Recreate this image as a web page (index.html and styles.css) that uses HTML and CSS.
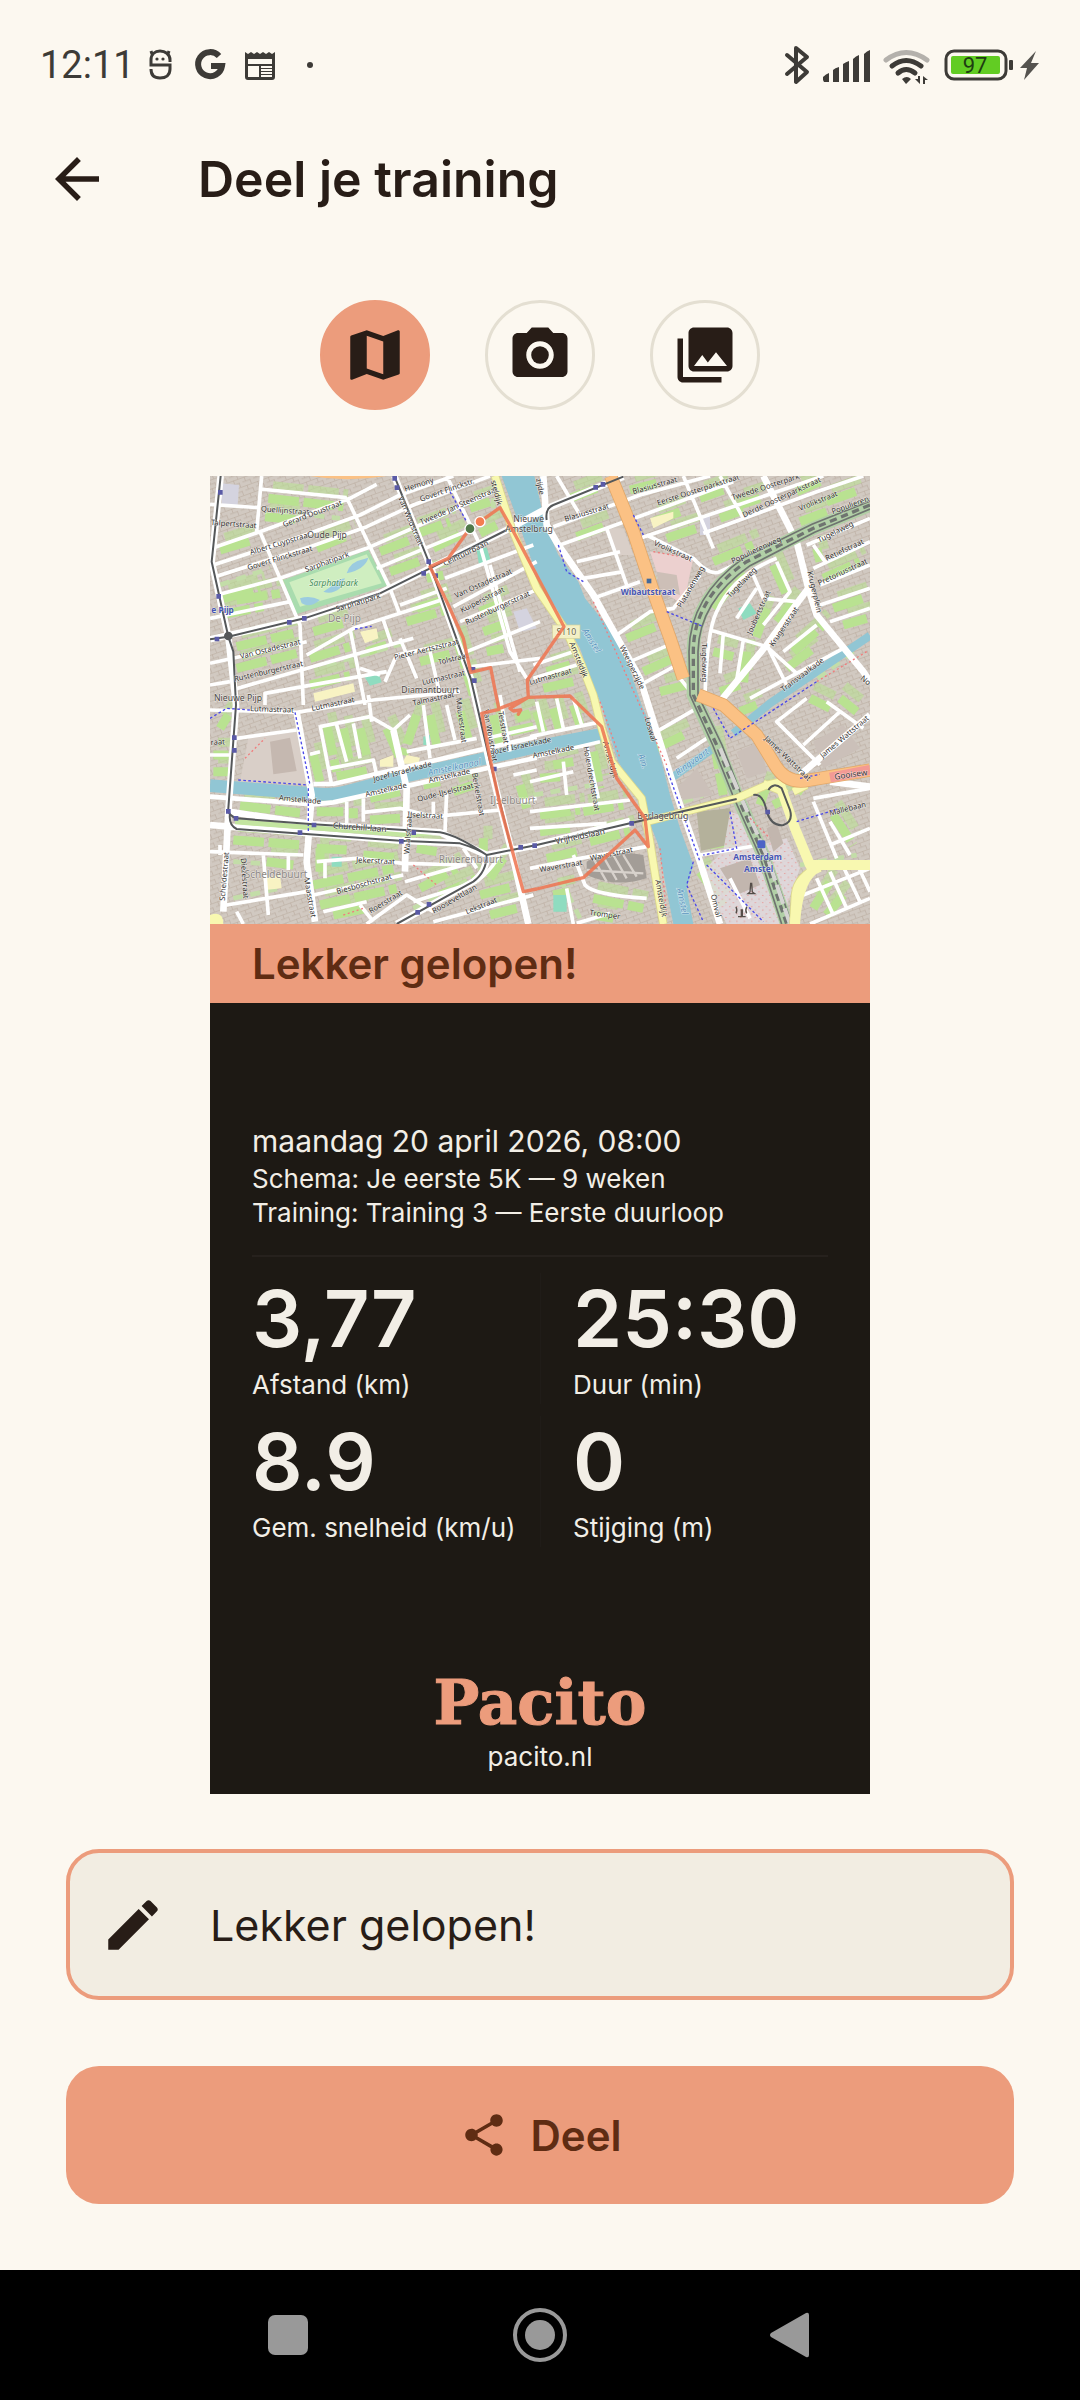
FILE: index.html
```html
<!DOCTYPE html>
<html lang="nl">
<head>
<meta charset="utf-8">
<meta name="viewport" content="width=device-width, initial-scale=1">
<title>Deel je training</title>
<link rel="stylesheet" href="styles.css">
</head>
<body>
<div class="status">
  <div class="status-side">
    <span class="clock">12:11</span>
    <svg class="ico-notes" width="170" height="40" viewBox="0 0 170 40" aria-hidden="true">
      <g fill="none" stroke="#3d3b37" stroke-width="3">
        <path d="M8 20h-2v-5c0-6 4-9 9-9s10 3 10 9v2M5 20h20v4c0 6-4 9-10 9s-9-3-9-9M7 9l-1-3M23 9l1-3"/>
      </g>
      <circle cx="12" cy="14" r="1.600" fill="#3d3b37"/><circle cx="18" cy="14" r="1.600" fill="#3d3b37"/>
      <path d="M74 11A12 12 0 1 0 77 21H66" fill="none" stroke="#3d3b37" stroke-width="6"/>
      <path d="M100 7l3 2 3-2 3 2 3-2 3 2 3-2 3 2 3-2 3 2 3-2V32q0 3-3 3H103q-3 0-3-3z" fill="#3d3b37"/>
      <path d="M103 14h24v5h-24zM103 21h11v11h-11zM116 21h11v2h-11zM116 24h11v2h-11zM116 27h11v2h-11zM116 30h11v2h-11z" fill="#fcf8f0"/>
      <circle cx="165" cy="20" r="3" fill="#3d3b37"/>
    </svg>
  </div>
  <svg class="ico-system" width="258" height="44" viewBox="0 0 258 44" aria-hidden="true">
    <path d="M5 12l20 17-11 10V5l11 9L5 31" fill="none" stroke="#3d3b37" stroke-width="4" stroke-linejoin="round" stroke-linecap="round"/>
    <path d="M41 37v-3q3-3 6-4v9h-5zM51 39V27q2-2 6-3v15zM61 39V21q3-2 6-3v21zM71 39V16q3-3 6-4v27zM82 39V11q3-3 6-4v32z" fill="#3d3b37"/>
    <g fill="none" stroke-linecap="round" stroke-width="5">
      <path d="M104 17Q124 2 145 17" stroke="#b4b1ac"/>
      <path d="M110 23Q124 12 139 23M116 30Q124 23 133 30" stroke="#3d3b37"/>
    </g>
    <path d="M120 36q5-4 9 0l-5 5zM133 36h3v-3h2v8zM141 33l5 4h-3v4h-2z" fill="#3d3b37"/>
    <rect x="164" y="8" width="60" height="28" rx="8" fill="none" stroke="#3d3b37" stroke-width="3"/>
    <rect x="169" y="13" width="49" height="18" rx="2" fill="#62cc23"/>
    <text class="battery-text" x="193" y="30" text-anchor="middle">97</text>
    <rect x="227" y="17" width="4" height="10" rx="1" fill="#3d3b37"/>
    <path d="M254 8L238 25h7l-3 12 15-17h-8z" fill="#55534f"/>
  </svg>
</div>

<header class="appbar">
  <button class="back" type="button" aria-label="Terug">
    <svg width="66" height="66" viewBox="0 0 24 24"><path fill="#281d17" d="M20 11H7.830l5.590-5.590L12 4l-8 8 8 8 1.410-1.410L7.830 13H20v-2z"/></svg>
  </button>
  <h1>Deel je training</h1>
</header>

<main>
  <div class="modes">
    <button class="mode mode-on" type="button" aria-label="Kaart"><svg width="66" height="66" viewBox="0 0 24 24"><path d="M20.500 3l-.16.030L15 5.100 9 3 3.360 4.900c-.21.070-.36.250-.36.480V20.500c0 .28.220.5.5.5l.16-.030L9 18.900l6 2.100 5.640-1.900c.21-.070.36-.25.36-.48V3.500c0-.28-.22-.5-.5-.5zM15 19l-6-2.110V5l6 2.110V19z"/></svg></button>
    <button class="mode" type="button" aria-label="Camera"><svg width="66" height="66" viewBox="0 0 24 24"><circle cx="12" cy="12" r="3.200"/><path d="M9 2L7.170 4H4c-1.100 0-2 .9-2 2v12c0 1.100.9 2 2 2h16c1.100 0 2-.9 2-2V6c0-1.100-.9-2-2-2h-3.170L15 2H9zm3 15c-2.760 0-5-2.240-5-5s2.240-5 5-5 5 2.240 5 5-2.240 5-5 5z"/></svg></button>
    <button class="mode" type="button" aria-label="Galerij"><svg width="66" height="66" viewBox="0 0 24 24"><path d="M22 16V4c0-1.100-.9-2-2-2H8c-1.100 0-2 .9-2 2v12c0 1.100.9 2 2 2h12c1.100 0 2-.9 2-2zm-11-4l2.030 2.710L16 11l4 5H8l3-4zM2 6v14c0 1.100.9 2 2 2h14v-2H4V6H2z"/></svg></button>
  </div>

  <article class="card">
    <svg class="map" viewBox="30 33 1980 1344" preserveAspectRatio="xMidYMid slice" role="img" aria-label="Kaart met de gelopen route">
      <defs>
        <pattern id="blocks" width="34" height="26" patternUnits="userSpaceOnUse" patternTransform="rotate(-20)">
          <rect width="34" height="26" fill="#d1c9c1"/>
          <path d="M0 1h34M0 14h24M10 0v14M24 12v14" stroke="#bbada2" stroke-width="2"/>
        </pattern>
        <pattern id="plaza" width="22" height="22" patternUnits="userSpaceOnUse">
          <rect width="22" height="22" fill="#e2dbe0"/>
          <path d="M3 5h4M14 15h4" stroke="#f08a8a" stroke-width="3"/>
        </pattern>
      </defs>
      <rect x="30" y="33" width="1980" height="1344" fill="url(#blocks)"/>

      <!-- gardens between the housing blocks -->
      <g id="gardens" fill="none" stroke="#b9e291" stroke-width="27" stroke-dasharray="92 14">
        <path d="M205 100L430 125M195 155L300 165M60 255L160 225M70 400l110-30M110 405l130-20M60 450l130-25M110 545l170-40M110 610l180-45M330 580l120-35M330 660l120-28M340 500l90-25M350 250l100-40M540 260l90-35M570 320l100-35M640 210l110-40M700 250l80-40M810 130l60-20M840 205l50-25M650 430l80-25M620 470l120-35M660 590l100-25M770 520l50 170M840 440l70-30M850 500l70-25M1000 340l40 60M500 560l60-20M680 340l50-10M860 560l50-10"/>
        <path d="M1110 100l80-30M1290 75l80-20M1130 215l80-30M1360 170l80-30M1400 220l90-30M1500 100l70-25M1560 160l70-25M1620 120l60-20M1790 80l70-30M1800 170l80-30M1880 110l100-35M1540 290l120-50M1280 520l100-40M1330 620l90-40M1380 680l80-20M1540 430l90-110M1720 300l40 90M1700 430l-40 110M1540 560l60 15M1640 560l-10 100M1560 680l60-20M1780 560l90-80M1760 610l80-60M1870 340l110-50M1900 430l90-30M1930 480l70-20M1730 470l50-60M1850 250l10 40M1040 620l70-20M1030 670l90-20"/>
        <path d="M60 790l25-40M40 870h45M40 920h45M120 1022l180 22M350 1040h80M460 1030v30M510 1000l90-20M510 1065l90-5M380 780l30 140M430 790l20 110M480 790l20 80M560 790l40 90M650 750l-40 120M340 870l20 80M410 935l100-20M690 750l20 90M780 740l30 100M100 1125l210 15M350 1150l90 5M360 1220v-70M650 1150l60 10M200 1190l80 10M340 1260l240-50M360 1320l230-50M400 1350l100-20M490 1170l100 8M660 1270l110-60M720 1290l110-50M840 1290l100-25M870 1350l80-20M850 1120v40M870 1240l40-60M760 980l60-20M670 960l50-10M880 750l20 90M950 760l40-15M930 800l70-15M960 960l20 70"/>
        <path d="M1010 740l20 60M1060 730l20 70M1120 720l20 60M1180 860l20 110M1060 900l60-10M1020 940l60-5M1020 1050l120-15M1150 1040l120-20M1020 1100l90-10M1040 1180l90-20M1170 1130l120-30M1060 1290l50-10M1180 1300l150 30M1180 1350l60 10M1370 850l80-40M1540 820l30 170M1500 1220l70 100M1520 1140l80-10M1700 960l-20 60M1720 1020l40-20M1780 960l30 20M1840 1330l50-80M1880 1350l50-60M1900 1050l60 90M1830 700l60 30M1920 700l50 40M1620 740l50-20"/>
      </g>
      <use href="#gardens" transform="translate(14 -38)" opacity=".55"/>
      <g fill="none" stroke="#c3dda8" stroke-width="14" stroke-dasharray="30 22">
        <path d="M240 140l180 20M60 360l150-50M380 600l250-70M880 100v60M1340 330l130 60M1800 1200l170-30M640 1330l160-80M100 1300l140-30M100 1190l80 5M1080 1240l60 120M1000 990l180-30M1960 560l-120 90M1450 1010l60-20"/>
      </g>

      <!-- squares and large buildings -->
      <path d="M65 55l52 5-4 60H65zM1500 150h30v60h-30zM940 440l40-10 30 60-50 10z" fill="#d4d3df"/>
      <path d="M145 820l145-20 30 160-200-10zM1220 190h50l30 80h-50z" fill="#d9cfc8"/>
      <path d="M210 830l60-12 20 100-70 10zM1340 360l80-40 20 60-60 30z" fill="#c5b8b0"/>
      <path d="M1350 260l130 20-30 140-60-40z" fill="#ecd0cf"/>
      <path d="M1370 320l60 10 10 60-60-20z" fill="#cdbfb7"/>
      <path d="M1490 1040l100-10 18 105-105 22z" fill="#b4b19b"/>
      <path d="M1430 970l60-60 50 80-90 15zM1610 860l70-30 20 90-60 20zM1840 830l90-50 50 70-110 60zM1555 1200l100-30 30 90-80 30z" fill="#cbc0b9"/>
      <path d="M1590 1040l60 20 30 80 80-20 40 90-60 167h-160l-80-150 70-70z" fill="url(#plaza)" opacity=".8"/>
      <path d="M1560 1210l90-30 30 80-70 30zM1700 1090l30-15 20 60-30 25z" fill="#c2b6ae"/>
      <path d="M480 500l50-10 5 30-40 15zM340 685l120-30 5 25-120 30zM540 885l40-15v35h-40zM620 870l40 8-5 18h-50zM190 1240l50-10 5 40-50 5zM1350 160l70-20v20l-60 30z" fill="#f8f3c3"/>
      <path d="M1160 1190q60-40 170-20l10 70q-90 30-180-10z" fill="#a39d97"/>
      <path d="M1180 1180l40 70M1210 1175l40 70M1240 1170l40 70M1270 1170l40 65M1160 1215l170 10" stroke="#d8d2cc" stroke-width="7"/>
      <g fill="#8fdcc0">
        <path d="M830 255l30-8 12 40-35 12zM490 630l45-8 10 30-35 10zM1615 430l35-15 20 30-40 20zM670 815l20-5v30h-20zM395 1175h30v30h-30zM1060 1290h40v50h-40z"/>
      </g>

      <!-- park -->
      <path d="M250 345L505 255 562 362 290 447z" fill="#a9dcae"/>
      <path d="M268 352L500 268 545 355 300 425z" fill="#cfeec0"/>
      <path d="M300 400q30-10 60 5-30 25-55 10zM370 380q25 10 50-10l15-30q-30 5-35 20zM440 325q10-35 50-42l15-5q-10 35-65 47z" fill="#9bcbe0"/>

      <!-- water -->
      <path d="M905 33L940 130 1000 300 1050 400 1100 480 1140 550 1175 650 1205 720 1220 780 1255 890 1290 950 1340 1050 1375 1140 1395 1250 1420 1377H1480L1460 1270 1480 1200 1440 1090 1410 990 1385 890 1355 790 1325 720 1285 600 1235 500 1155 400 1135 350 1075 270 1045 200 1025 130 1003 33z" fill="#91c6d4"/>
      <g fill="none" stroke="#91c6d4">
        <path d="M30 962L340 986Q400 992 440 980L610 935 880 875 1010 845 1212 806" stroke-width="38"/>
        <path d="M1420 935L1540 850M1600 805L1710 715 1850 620 2010 512" stroke-width="24"/>
      </g>

      <!-- side streets -->
      <g fill="none" stroke="#fff" stroke-width="11" stroke-linejoin="round">
        <path d="M185 33L170 200M30 118l145 10M180 72L440 98M40 248L180 200 450 100 530 58M40 300L300 215 480 150 600 90 760 33M45 335L330 245 500 185 640 120 870 33M50 390L240 340 500 250 660 180 880 80M180 200L300 480 310 720M440 98L570 370 600 450M530 310L820 190M30 460L270 410M30 595L320 530M95 675L460 570 640 520M320 570L460 490 740 400M450 490L495 720M550 465L575 540M600 420L740 370M600 520L650 640M555 650L590 570 780 530M690 560L720 690M740 33L840 240 930 560 980 640M735 340L1000 240M760 425L1010 290M780 470L1020 370M800 560L1020 470M815 605L1020 580M870 300L960 620M195 720v-35L560 620M30 660l60-10M480 610l60 20"/>
        <path d="M1070 33L1140 150M1060 185L1320 90 1530 33M1080 240L1330 150 1600 50M1320 220L1790 60 1870 33M1510 205L1850 80 1990 33M1450 33L1540 250M1560 33L1630 160M1340 210L1480 280Q1530 335 1560 320L1730 240M1180 400L1320 350M1250 510L1350 440 1420 430 1500 330M1220 190L1280 360M1130 290L1260 260M1150 340L1270 320M1290 590L1430 530M1330 655L1430 600M2010 160L1820 240M2010 230L1840 310M2010 300L1860 360M1860 420L2010 370M1890 470L2010 430M1730 280Q1600 330 1550 440 1520 500 1515 700M1660 330L1690 400 1790 410M1730 290L1770 380 1690 480M1530 495L1700 545 1790 625M1570 505L1560 625M1630 525L1610 645M1700 540L1760 660M1610 460L1670 370M1650 700L1930 550M1750 560L1850 480M1480 690L1440 640M1840 240l35 50M1000 600L1120 560M1000 640L1130 600"/>
        <path d="M30 735L290 742 520 705 780 680M110 820L290 795M30 870H90M360 785L510 755 580 795 630 750M505 690L515 770M360 780L395 960M410 780L440 890M460 775L480 880M330 868L360 860M390 910L520 885 530 930M670 720L690 880M740 720L765 825M620 860L830 820M490 1000V1070M440 1010V1075M490 1042L600 1030 700 1055 900 1035M740 980L735 1100M350 1190L470 1180 610 1195 800 1200M375 1190V1240M340 1290L610 1230M370 1340L500 1310M615 1250L790 1200M640 1310L830 1250M30 1160L310 1170M190 1170L205 1350M265 1170V1215M80 1320L320 1280M110 1340l20 37M500 1377L620 1290 700 1340M700 1370L1000 1290M860 820L1010 785M900 690L930 860M940 930L1010 915M960 1010L1010 1000M60 1140v30M480 1320l40 50M790 1150l40 60M830 1250q60-50 70-90M700 1010v50"/>
        <path d="M1010 710L1030 800M1070 700L1090 790M1120 700L1145 780M990 815L1205 770M990 880L1200 830M1160 840L1195 1000M990 950L1120 920M1090 890L1100 990M990 1040L1290 1005M990 1090L1220 1075M990 1210L1140 1180 1340 1145M1120 1170L1155 1260Q1180 1290 1340 1300M1100 1270L1120 1377M1130 1375l100-30M1370 800L1490 730M1430 880L1520 820M1820 700L1730 770 1860 900M1880 710L1990 790M1920 740L1810 840M1840 1000L2010 970M1840 1010L1910 1180M1890 1070L1950 1170M2010 1090L1890 1140M1810 1290L2010 1210M1850 1240L1900 1350M1890 1220L1940 1330M1930 1205L1980 1310M1970 1195L2010 1280M1830 1377L2010 1300M1500 1170L1680 1140M1590 1240l60 120"/>
      </g>
      <!-- wider streets -->
      <g fill="none" stroke="#fff" stroke-width="20" stroke-linejoin="round">
        <path d="M62 33L35 290 85 515 108 720 85 1040 70 1340M30 523L313 460 540 385 690 310 920 195 1040 130 1270 35M583 33L690 300 812 640 870 900 935 1160 985 1377M85 1040L340 1078 720 1102 860 1170 1010 1140 1290 1075M30 1080L600 1127 780 1135 860 1170Q860 1220 820 1250L590 1377"/>
        <path d="M1030 33L1040 180 1075 240 1180 390 1320 640 1345 720 1430 990 1500 1190 1560 1377M1690 33L1790 230 1825 370 1850 450 1990 620 2010 650M1825 370L1780 430 1700 540 1560 710M1800 930L2010 750M2010 965L1890 950"/>
        <path d="M290 742L335 990 320 1190 345 1370M580 795L620 970 615 1220M990 1145L1290 1068"/>
      </g>
      <!-- quays -->
      <path d="M340 957H400L880 845 1010 815M30 995L340 1018 400 1012 860 910 1010 878" fill="none" stroke="#fff" stroke-width="14"/>
      <path d="M105 1062L700 1110 640 1118 105 1078z" fill="#c3e5a0"/>

      <!-- railway -->
      <g fill="none">
        <path d="M2010 120L1840 190 1640 290Q1480 400 1480 560V690L1550 840 1610 990 1690 1170 1760 1377" stroke="#b1cfa6" stroke-width="40"/>
        <g stroke="#6f7470" stroke-width="5">
          <path d="M2010 108L1836 178 1632 278Q1468 395 1467 560L1470 690 1538 840 1598 990 1678 1170 1745 1377M2010 132L1844 202 1650 302Q1497 410 1494 560V690L1566 840 1624 990 1704 1170 1775 1377"/>
          <path d="M2010 120L1840 190 1640 290Q1480 400 1480 560V690L1550 840 1610 990 1690 1170 1760 1377" stroke-width="10" stroke-dasharray="22 14"/>
        </g>
        <path d="M1560 850L1620 990 1700 1170 1770 1377" stroke="#d5d4d2" stroke-width="12" stroke-dasharray="60 14"/>
      </g>

      <!-- secondary and main roads -->
      <g fill="none" stroke-linejoin="round" stroke-linecap="butt">
        <path d="M885 33L935 190 1010 370 1100 500 1145 600 1180 690 1205 790 1235 890 1325 1000 1350 1130 1375 1290 1390 1377M1340 1070L1610 1000 1700 960 1740 950 1785 1090 1830 1200M2010 1200L1870 1200Q1790 1230 1785 1290L1780 1377M1780 980l40-20M1690 955l70 30" stroke="#dcd98d" stroke-width="25"/>
        <path d="M885 33L935 190 1010 370 1100 500 1145 600 1180 690 1205 790 1235 890 1325 1000 1350 1130 1375 1290 1390 1377M1340 1070L1610 1000 1700 960 1740 950 1785 1090 1830 1200M2010 1200L1870 1200Q1790 1230 1785 1290L1780 1377M1780 980l40-20M1690 955l70 30" stroke="#f8f8b0" stroke-width="20"/>
        <path d="M1740 960L1785 1090 1830 1200H2010M1860 1205Q1795 1225 1785 1377" stroke="#f8f8b0" stroke-width="30"/>
        <path d="M1232 33L1300 200 1360 380 1410 520 1450 640M1495 690L1570 720 1670 810 1725 900Q1760 960 1830 945L2010 915" stroke="#e2a869" stroke-width="40"/>
        <path d="M1232 33L1300 200 1360 380 1410 520 1450 640M1495 690L1570 720 1670 810 1725 900Q1760 960 1830 945L2010 915" stroke="#fbc184" stroke-width="35"/>
        <path d="M1890 938L2010 915" stroke="#f39a94" stroke-width="30"/>
      </g>
      <path d="M330 33Q440 52 560 33z" fill="#fbc184"/>
      <path d="M30 1350q40-15 40 27H30z" fill="#f8f8b0"/>

      <!-- cycle paths -->
      <g fill="none" stroke="#4a48e8" stroke-width="4" stroke-dasharray="8 7">
        <path d="M285 742L330 960M115 945L325 960M325 970V1100M30 760l50-30 70 5M750 80l50 90M1075 240L1100 320 1150 350M1400 440L1510 485M1400 910L1500 1190M1540 730L1590 820 1850 650M1590 1040L1610 1150 1510 1170M1520 1200L1690 1370M1790 1070L1920 1030M1800 940l60-12M465 492l50-8M1300 150l30 60M1480 1190l-20 70 50 110"/>
      </g>
      <g fill="none" stroke="#f07d7d" stroke-width="4" stroke-dasharray="6 8">
        <path d="M1180 410L1400 900M135 880l60-60M2000 560L1850 650M640 1200l70 60M430 1350l60-20M1380 1150l20 200M1650 1060l60 60M1360 260l110 20M1200 710l60 170"/>
      </g>

      <!-- tram lines -->
      <g fill="none" stroke="#55585a" stroke-width="6" stroke-linejoin="round">
        <path d="M62 33L35 290 85 515 100 560 108 720 85 1030Q82 1050 110 1060L340 1078 720 1102Q770 1110 860 1170L935 1155 1010 1140 1290 1075 1610 1002M30 523L85 515 313 460 540 385 690 310 920 195M1040 165Q1035 130 1060 120L1270 35M583 33L690 300 812 640 870 890 935 1155M90 1045Q85 1080 110 1092L600 1127 780 1135Q830 1150 860 1170 860 1220 820 1250L590 1377M1660 990Q1690 985 1700 1040 1715 1085 1750 1080 1780 1070 1770 1035L1745 970Q1720 950 1705 975"/>
        <circle cx="85" cy="513" r="10" fill="#55585a"/>
      </g>
      <path d="M577 33h14v14h-14zM584 61h14v14h-14zM54 75h14v14H54zM49 387h14v14H49zM44 515h14v14H44zM261 465h14v14h-14zM306 453h14v14h-14zM664 318h14v14h-14zM679 283h14v14h-14zM700 325h14v14h-14zM812 606h14v14h-14zM816 640h14v14h-14zM96 811h14v14H96zM96 849h14v14H96zM78 1032h14v14H78zM101 1053h14v14h-14zM335 1073h14v14h-14zM293 1096h14v14h-14zM597 1122h14v14h-14zM634 1096h14v14h-14zM876 905h14v14h-14zM955 1140h14v14h-14zM997 1135h14v14h-14zM680 1311h14v14h-14zM646 1335h14v14h-14zM1288 1068h14v14h-14zM1180 60h14v14h-14zM1202 51h14v14h-14zM1696 1034h14v14h-14z" fill="#5a5aa6"/>
      <path d="M1340 341h14v14h-14z" fill="#456a9a"/>
      <rect x="1672" y="1126" width="24" height="24" rx="5" fill="#4d63c6"/>
      <path d="M1644 1286h20l-7-5-2-26h-3l-2 26zM1614 1355h10v-20h3v20h10M1608 1325q5 12 0 20M1640 1325q-5 12 0 20" fill="none" stroke="#554d48" stroke-width="4"/>

      <!-- route number plate -->
      <rect x="1058" y="480" width="82" height="40" fill="#f3f0c4" stroke="#d6d29b" stroke-width="2"/>

      <!-- street names -->
      <g class="street">
        <text transform="translate(182 139) rotate(4)">Quellijnstraat</text>
        <text transform="translate(32 180) rotate(4)">Talpertstraat</text>
        <text transform="translate(252 187) rotate(-21)">Gerard Doustraat</text>
        <text transform="translate(152 270) rotate(-17)">Albert Cuypstraat</text>
        <text transform="translate(145 316) rotate(-17)">Govert Flinckstraat</text>
        <text transform="translate(318 322) rotate(-20)">Sarphatipark</text>
        <text transform="translate(410 440) rotate(-17)">Sarphatipark</text>
        <text transform="translate(594 98) rotate(67)">Van Woustraat</text>
        <text transform="translate(616 80) rotate(-18)">Hemony</text>
        <text transform="translate(662 110) rotate(-19)">Govert Flinckstr.</text>
        <text transform="translate(664 180) rotate(-24)">Tweede Jan Steenstraat</text>
        <text transform="translate(734 304) rotate(-26)">Ceintuurbaan</text>
        <text transform="translate(768 400) rotate(-24)">Van Ostadestraat</text>
        <text transform="translate(786 444) rotate(-27)">Kuipersstraat</text>
        <text transform="translate(800 480) rotate(-25)">Rustenburgerstraat</text>
        <text transform="translate(122 582) rotate(-14)">Van Ostadestraat</text>
        <text transform="translate(104 650) rotate(-13)">Rustenburgerstraat</text>
        <text transform="translate(584 585) rotate(-14)">Pieter Aertszstraat</text>
        <text transform="translate(716 600) rotate(-14)">Tolstraat</text>
        <text transform="translate(668 660) rotate(-13)">Lutmastraat</text>
        <text transform="translate(640 722) rotate(-12)">Talmastraat</text>
        <text transform="translate(336 738) rotate(-12)">Lutmastraat</text>
        <text transform="translate(150 738) rotate(2)">Lutmastraat</text>
        <text transform="translate(990 660) rotate(-16)">Lutmastraat</text>
        <text transform="translate(32 840) rotate(-3)">raat</text>
        <text transform="translate(872 48) rotate(75)">steldijk</text>
        <text transform="translate(1008 42) rotate(78)">zijde</text>
        <text transform="translate(1300 88) rotate(-16)">Blasiusstraat</text>
        <text transform="translate(1096 170) rotate(-17)">Blasiusstraat</text>
        <text transform="translate(1374 122) rotate(-18)">Eerste Oosterparkstraat</text>
        <text transform="translate(1598 106) rotate(-18)">Tweede Oosterpark</text>
        <text transform="translate(1632 158) rotate(-25)">Derde Oosterparkstraat</text>
        <text transform="translate(1800 138) rotate(-22)">Vrolikstraat</text>
        <text transform="translate(1898 148) rotate(-20)">Populieren</text>
        <text transform="translate(1360 240) rotate(24)">Vrolikstraat</text>
        <text transform="translate(1598 296) rotate(-25)">Populierenweg</text>
        <text transform="translate(1858 234) rotate(-27)">Tugelaweg</text>
        <text transform="translate(1880 288) rotate(-25)">Retiefstraat</text>
        <text transform="translate(1858 362) rotate(-25)">Pretoriusstraat</text>
        <text transform="translate(1590 400) rotate(-46)">Tugelaweg</text>
        <text transform="translate(1444 430) rotate(-60)">Platanenweg</text>
        <text transform="translate(1654 510) rotate(-66)">Joubertstraat</text>
        <text transform="translate(1720 546) rotate(-56)">Krugerstraat</text>
        <text transform="translate(1822 320) rotate(77)">Krugerplein</text>
        <text transform="translate(1506 535) rotate(90)">Tugelaweg</text>
        <text transform="translate(1750 682) rotate(-37)">Transvaalkade</text>
        <text transform="translate(1980 642) rotate(40)">No</text>
        <text transform="translate(1258 545) rotate(64)">Weesperzijde</text>
        <text transform="translate(1108 535) rotate(68)">Amsteldijk</text>
        <text transform="translate(768 700) rotate(83)">Mauvestraat</text>
        <text transform="translate(850 735) rotate(80)">Van Woustraat</text>
        <text transform="translate(894 740) rotate(80)">Tesstraat</text>
        <text transform="translate(522 950) rotate(-15)">Jozef Israelskade</text>
        <text transform="translate(878 868) rotate(-12)">Jozef Israelskade</text>
        <text transform="translate(236 1006) rotate(5)">Amstelkade</text>
        <text transform="translate(498 996) rotate(-13)">Amstelkade</text>
        <text transform="translate(688 954) rotate(-13)">Amstelkade</text>
        <text transform="translate(1000 880) rotate(-12)">Amstelkade</text>
        <text transform="translate(654 1010) rotate(-14)">Oude-IJselstraat</text>
        <text transform="translate(622 1056) rotate(3)">IJselstraat</text>
        <text transform="translate(816 925) rotate(80)">Berkelstraat</text>
        <text class="wide" transform="translate(398 1090) rotate(4)">Churchill-laan</text>
        <text transform="translate(628 1168) rotate(-86)">Waalstraat</text>
        <text transform="translate(468 1192) rotate(3)">Jekerstraat</text>
        <text transform="translate(74 1308) rotate(-85)">Scheldestraat</text>
        <text transform="translate(122 1180) rotate(86)">Diezestraat</text>
        <text transform="translate(312 1240) rotate(80)">Maasstraat</text>
        <text transform="translate(412 1288) rotate(-16)">Biesboschstraat</text>
        <text transform="translate(512 1346) rotate(-31)">Roerstraat</text>
        <text transform="translate(702 1346) rotate(-30)">Rooseveltlaan</text>
        <text transform="translate(800 1348) rotate(-22)">Lekstraat</text>
        <text transform="translate(1150 846) rotate(80)">Holendrechtstraat</text>
        <text transform="translate(1208 832) rotate(74)">Amsteldijk</text>
        <text transform="translate(1334 760) rotate(74)">Loswal</text>
        <text class="wide" transform="translate(1068 1138) rotate(-12)">Vrijheidslaan</text>
        <text transform="translate(1020 1222) rotate(-10)">Waverstraat</text>
        <text transform="translate(1172 1188) rotate(-12)">Waverstraat</text>
        <text transform="translate(1366 1246) rotate(80)">Amsteldijk</text>
        <text transform="translate(1168 1350) rotate(8)">Tromper</text>
        <text transform="translate(1692 822) rotate(44)">James Wattstraat</text>
        <text transform="translate(1868 880) rotate(-40)">James Wattstraat</text>
        <text class="wide" transform="translate(1904 944) rotate(-8)">Gooisew</text>
        <text transform="translate(1890 1052) rotate(-14)">Mallebaan</text>
        <text transform="translate(1532 1290) rotate(76)">Omval</text>
      </g>
      <g class="watername">
        <text transform="translate(1146 498) rotate(58)">Amstel</text>
        <text transform="translate(1314 870) rotate(72)">Am.</text>
        <text transform="translate(1430 1272) rotate(78)">Amstel</text>
        <text transform="translate(686 932) rotate(-12)">Amstelkanaal</text>
        <text transform="translate(1434 932) rotate(-36)">Ringvaart</text>
      </g>
      <g class="place">
        <text x="322" y="219">Oude Pijp</text>
        <text x="604" y="683">Diamantbuurt</text>
        <text x="42" y="708">Nieuwe Pijp</text>
        <text x="940" y="172">Nieuwe</text>
        <text x="916" y="202">Amstelbrug</text>
        <text x="1312" y="1063">Berlagebrug</text>
      </g>
      <g class="district">
        <text x="384" y="472">De Pijp</text>
        <text x="870" y="1016">IJselbuurt</text>
        <text x="716" y="1194">Rivierenbuurt</text>
        <text x="134" y="1238">Scheldebuurt</text>
      </g>
      <text class="parkname" x="328" y="364">Sarphatipark</text>
      <g class="station">
        <text x="34" y="443">e Pijp</text>
        <text x="1262" y="390">Wibautstraat</text>
        <text x="1600" y="1186">Amsterdam</text>
        <text x="1632" y="1220">Amstel</text>
      </g>
      <text class="plate" x="1099" y="509" text-anchor="middle">S110</text>

      <!-- the run -->
      <path d="M810 190L745 280 690 305 745 420 790 520 812 622 872 608 888 690 897 733 845 745 870 880 900 1020 970 1280 1010 1272 1150 1238 1305 1095 1345 1145 1335 1060 1250 940 1205 785 1110 693 985 697 905 728M985 697L982 645 1092 485 935 190 900 128 840 170M985 697L930 730 940 738 962 735 955 748" fill="none" stroke="#ee7653" stroke-opacity=".88" stroke-width="10" stroke-linejoin="round" stroke-linecap="round"/>
      <circle cx="810" cy="191" r="15" fill="#51784a" stroke="#fff" stroke-width="4"/>
      <circle cx="840" cy="170" r="15" fill="#f47c50" stroke="#fff" stroke-width="4"/>
    </svg>

    <p class="caption">Lekker gelopen!</p>

    <div class="details">
      <p class="date">maandag 20 april 2026, 08:00</p>
      <p class="line">Schema: Je eerste 5K — 9 weken</p>
      <p class="line">Training: Training 3 — Eerste duurloop</p>
      <dl class="stats">
        <div class="stat"><dd>3,77</dd><dt>Afstand (km)</dt></div>
        <div class="stat"><dd>25:30</dd><dt>Duur (min)</dt></div>
        <div class="stat"><dd>8.9</dd><dt>Gem. snelheid (km/u)</dt></div>
        <div class="stat"><dd>0</dd><dt>Stijging (m)</dt></div>
      </dl>
      <div class="brand">
        <p class="logo">Pacito</p>
        <p class="site">pacito.nl</p>
      </div>
    </div>
  </article>

  <label class="field">
    <svg width="66" height="66" viewBox="0 0 24 24" role="img" aria-label="Bijschrift"><path fill="#281d17" d="M3 17.250V21h3.750L17.810 9.940l-3.750-3.750L3 17.250zM20.710 7.040c.39-.39.39-1.020 0-1.410l-2.340-2.340c-.39-.39-1.020-.39-1.410 0l-1.830 1.830 3.750 3.750 1.830-1.830z"/></svg>
    <input type="text" value="Lekker gelopen!">
  </label>

  <button class="share" type="button">
    <svg width="50" height="50" viewBox="0 0 24 24" aria-hidden="true"><path fill="#5f2c13" d="M18 16.080c-.76 0-1.440.3-1.960.77L8.910 12.700c.050-.23.090-.46.090-.7s-.040-.47-.090-.7l7.050-4.110c.54.5 1.250.81 2.040.81 1.660 0 3-1.340 3-3s-1.340-3-3-3-3 1.340-3 3c0 .24.040.47.090.7L8.040 9.810C7.500 9.310 6.790 9 6 9c-1.660 0-3 1.340-3 3s1.340 3 3 3c.79 0 1.500-.31 2.040-.81l7.120 4.160c-.050.21-.080.43-.080.65 0 1.610 1.310 2.920 2.920 2.920s2.920-1.310 2.920-2.920-1.310-2.920-2.920-2.920z"/></svg>
    Deel
  </button>
</main>

<nav class="sysnav">
  <button type="button" aria-label="Recente apps"><svg width="60" height="60" viewBox="0 0 60 60"><rect x="10" y="10" width="40" height="40" rx="7"/></svg></button>
  <button type="button" aria-label="Startscherm"><svg width="60" height="60" viewBox="0 0 60 60"><circle cx="30" cy="30" r="15"/><circle class="ring" cx="30" cy="30" r="25"/></svg></button>
  <button type="button" aria-label="Terug"><svg width="60" height="60" viewBox="0 0 60 60"><path d="M9 28L44 8q3-1 3 2v40q0 3-3 2L9 32q-2-2 0-4z"/></svg></button>
</nav>
</body>
</html>
```
FILE: styles.css
```css
* { box-sizing: border-box; }

body {
  margin: 0;
  min-height: 100vh;
  display: flex;
  flex-direction: column;
  background: #fcf8f0;
  color: #281d17;
  font-family: Inter, "Liberation Sans", sans-serif;
}

button {
  padding: 0;
  border: 0;
  background: none;
  font: inherit;
  color: inherit;
}

svg { display: block; flex: none; }
h1, p, dl, dd { margin: 0; }

/* status bar */
.status {
  display: flex;
  justify-content: space-between;
  align-items: center;
  height: 130px;
  padding: 0 40px;
}
.status-side { display: flex; align-items: center; gap: 10px; }
.clock { font: 38px/44px Roboto, sans-serif; color: #3d3b37; }
.battery-text { font: 22px Roboto, sans-serif; fill: #1e3d12; }

/* app bar */
.appbar {
  display: flex;
  align-items: center;
  gap: 88px;
  height: 98px;
  padding: 0 44px;
}
.appbar h1 { font-size: 50px; line-height: 60px; font-weight: 600; }

main {
  flex: 1;
  display: flex;
  flex-direction: column;
  align-items: center;
  padding: 72px 66px 66px;
}

.modes { display: flex; gap: 55px; margin-bottom: 66px; }
.mode {
  display: grid;
  place-items: center;
  width: 110px;
  height: 110px;
  border: 3px solid #e4dfd2;
  border-radius: 50%;
  fill: #281d17;
}
.mode-on { background: #ec9c7c; border-color: #ec9c7c; }

/* share card */
.card {
  width: 100%;
  max-width: 660px;
  margin-bottom: 55px;
  background: #1d1914;
  color: #f2eee6;
}
.map { width: 100%; height: auto; }
.caption {
  padding: 14px 42px;
  background: #ec9c7c;
  color: #5f2c13;
  font-size: 42px;
  line-height: 51px;
  font-weight: 600;
}
.details { padding: 117px 42px 19px; }
.date { font-size: 30px; line-height: 42px; }
.line { font-size: 26px; line-height: 34px; }
.stats {
  display: grid;
  grid-template-columns: 1fr 1fr;
  row-gap: 12px;
  margin-top: 25px;
  padding-top: 16px;
  border-top: 2px solid #26211d;
}
.stat { display: flex; flex-direction: column; gap: 3px; }
.stat dd { font-size: 79px; line-height: 90px; font-weight: 600; }
.stat dt { font-size: 26px; line-height: 38px; white-space: nowrap; }
.stat:nth-child(even) { padding-left: 32px; border-left: 1px solid #201c18; }

.brand { margin-top: 120px; text-align: center; }
.logo {
  color: #ec9c7c;
  font: 700 61px/72px "DejaVu Serif", serif;
  -webkit-text-stroke: 1px #ec9c7c;
}
.site { font-size: 26px; line-height: 36px; }

/* caption field and share button */
.field {
  display: flex;
  align-items: center;
  gap: 44px;
  width: 100%;
  height: 151px;
  margin-bottom: 66px;
  padding: 0 30px;
  border: 4px solid #ec9c7c;
  border-radius: 33px;
  background: #f2ede2;
}
.field input {
  flex: 1;
  min-width: 0;
  padding: 0;
  border: 0;
  outline: 0;
  background: none;
  color: #281d17;
  font: 43px/54px Inter, sans-serif;
}
.share {
  display: flex;
  justify-content: center;
  align-items: center;
  gap: 22px;
  width: 100%;
  height: 138px;
  border-radius: 33px;
  background: #ec9c7c;
  color: #5f2c13;
  font-size: 42px;
  font-weight: 600;
}

/* system navigation */
.sysnav {
  display: grid;
  grid-template-columns: repeat(3, 1fr);
  place-items: center;
  height: 130px;
  padding: 0 15%;
  background: #000;
}
.sysnav svg { fill: #999; }
.sysnav .ring { fill: none; stroke: #999; stroke-width: 4px; }

/* map lettering */
.map text {
  font-family: "Noto Sans", sans-serif;
  paint-order: stroke;
  stroke: #fff;
  stroke-opacity: 0.6;
  stroke-width: 3px;
}
.street { font-size: 23px; fill: #33302e; }
.wide { font-size: 25px; }
.place { font-size: 26px; fill: #4b4744; }
.district { font-size: 30px; fill: #8b8682; }
.watername { font-size: 27px; font-style: italic; fill: #5a94bd; }
.parkname { font-size: 25px; font-style: italic; fill: #3f8a55; }
.station { font-size: 25px; font-weight: 700; fill: #4655b4; }
.plate { font-size: 26px; fill: #6b6340; }
```
